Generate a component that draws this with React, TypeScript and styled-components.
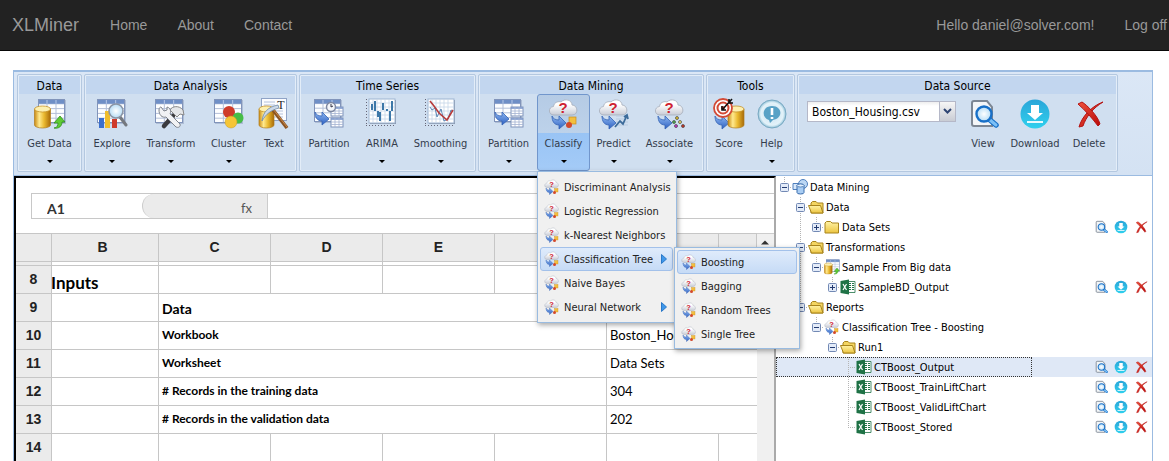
import React from "react";
import styled, { createGlobalStyle, css } from "styled-components";

const Global = createGlobalStyle`
  *, *::before, *::after { box-sizing: border-box; }
  html, body { margin: 0; background: #fff; overflow: hidden; }
  body { font-family: "DejaVu Sans Condensed", "Liberation Sans", sans-serif; font-size: 11px; color: #000; }
  button, input, select { font: inherit; color: inherit; margin: 0; }
  svg { display: block; flex: none; }
`;

/* ---------- site header ---------- */

const NavBar = styled.nav`
  display: flex;
  align-items: center;
  height: 51px;
  padding-left: 12px;
  background: #222;
  border-bottom: 1px solid #080808;
  font-family: "Liberation Sans", Arial, sans-serif;
  font-size: 14px;
  white-space: nowrap;
`;
const Brand = styled.a`
  color: #999;
  font-size: 18px;
  text-decoration: none;
`;
const NavLinks = styled.div`
  display: flex;
  gap: 30px;
  margin-left: 31px;
`;
const Account = styled(NavLinks)`
  margin-left: auto;
  margin-right: 2px;
`;
const NavLink = styled.a`
  color: #999;
  text-decoration: none;
`;

/* ---------- ribbon ---------- */

const Workspace = styled.main`
  margin: 19px 16px 0 13px;
  border: 1px solid #9bbbe1;
  border-bottom: 0;
`;
const Ribbon = styled.div`
  display: flex;
  gap: 2px;
  padding: 2px 3px 3px;
  background: linear-gradient(#dbe7f6, #d4e2f3);
  border-top: 1px solid #9bbbe1;
  border-bottom: 1px solid #9bbbe1;
`;
const Group = styled.section`
  height: 98px;
  padding: 1px;
  background: #d0dff0;
  border: 1px solid #b4c8e0;
  border-radius: 2px;
  box-shadow: inset 0 0 0 1px #e3edf8;
`;
const GroupTitle = styled.h2`
  margin: 0;
  height: 18px;
  background: #c2d6ef;
  font-size: 12px;
  font-weight: normal;
  line-height: 20px;
  text-align: center;
`;
const GroupBody = styled.div`
  display: flex;
`;
const ToolSlot = styled.div`
  position: relative;
`;
const ToolButton = styled.button<{ $width: number; $active?: boolean }>`
  display: flex;
  flex-direction: column;
  align-items: center;
  width: ${(p) => p.$width}px;
  height: 77px;
  padding: 3px 0 0;
  background: none;
  border: 1px solid transparent;
  border-radius: 3px;
  color: #333c4c;
  line-height: 14px;
  white-space: nowrap;
  ${(p) =>
    p.$active &&
    css`
      background: linear-gradient(#b5cbe5 0, #bdd2ea 38px, #99c4f5 38px, #a4cbf7 100%);
      border-color: #7196cc;
    `}
`;
const ToolLabel = styled.span`
  margin-top: 7px;
`;
const Caret = styled.span`
  width: 0;
  margin-top: 9px;
  border: 3px solid transparent;
  border-top-color: #000;
  border-bottom: 0;
`;
const SourcePicker = styled.label`
  position: relative;
  width: 149px;
  height: 21px;
  margin: 7px 2px 0 8px;
`;
const SourceSelect = styled.select`
  width: 100%;
  height: 100%;
  padding: 0 20px 0 4px;
  appearance: none;
  background: linear-gradient(#eee, #fff 4px);
  border: 1px solid #b5b8c8;
  border-radius: 0;
  font-size: 12px;
  color: #000;
`;
const SourceArrow = styled.span`
  position: absolute;
  top: 0;
  right: 0;
  display: grid;
  place-items: center;
  width: 17px;
  height: 21px;
  background: linear-gradient(#f6f6f6, #c9ccd4);
  border: 1px solid #b5b8c8;
  pointer-events: none;
`;

/* ---------- drop-down menus ---------- */

const MenuItem = styled.button<{ $active?: boolean }>`
  display: flex;
  align-items: center;
  gap: 4px;
  width: 100%;
  height: 24px;
  padding: 0 5px 0 3px;
  background: ${(p) => (p.$active ? "linear-gradient(#dfebfb, #c6dbf6)" : "none")};
  border: 1px solid ${(p) => (p.$active ? "#a3c1ea" : "transparent")};
  border-radius: 3px;
  color: #222;
  text-align: left;
  white-space: nowrap;
`;
const MenuPanel = styled.div`
  position: absolute;
  z-index: 5;
  top: 100%;
  left: 0;
  width: 140px;
  padding: 3px 3px 3px 2px;
  background: #f0f0f0;
  border: 1px solid #99bbe0;
  box-shadow: 1px 2px 5px rgba(0, 0, 0, 0.35);
`;
const SubPanel = styled(MenuPanel)`
  top: 0;
  left: calc(100% + 1px);
  width: 126px;
  padding: 2px;
`;
const MenuSlot = styled.div`
  position: relative;
`;
const MenuArrow = styled.svg`
  margin-left: auto;
`;

/* ---------- spreadsheet ---------- */

const Panes = styled.div`
  display: flex;
  align-items: stretch;
`;
const Sheet = styled.section`
  flex: 1;
  min-width: 0;
  padding-top: 15px;
  background: #fff;
  border-top: 2px solid #000;
  border-left: 2px solid #000;
  border-right: 2px solid #aaa;
`;
const FormulaBar = styled.div`
  display: flex;
  height: 26px;
  margin-left: 15px;
  border: 1px solid #c8c8c8;
  border-right: 0;
`;
const NameBox = styled.input`
  width: 110px;
  padding: 4px 0 0 15px;
  border: 0;
  background: none;
  font-family: Lato, "Open Sans", sans-serif;
  font-weight: bold;
  font-size: 14px;
  color: #333;
`;
const FxLabel = styled.label`
  width: 126px;
  padding: 5px 15px 0 0;
  background: #ebebeb;
  border: 1px solid #ccc;
  border-width: 0 1px;
  border-radius: 13px 0 0 13px;
  font-family: Lato, "Open Sans", sans-serif;
  font-size: 13px;
  line-height: 18px;
  color: #555;
  text-align: right;
`;
const FormulaInput = styled.input`
  flex: 1;
  min-width: 0;
  border: 0;
  background: none;
`;
const GridArea = styled.div`
  display: flex;
  margin-top: 14px;
`;
const Grid = styled.table`
  flex: 1;
  width: 0;
  table-layout: fixed;
  border-collapse: separate;
  border-spacing: 0;
  font-family: Lato, "Open Sans", sans-serif;
`;
const cellLines = css`
  padding: 0;
  border: 0 solid #c6c6c6;
  border-right-width: 1px;
  border-bottom-width: 1px;
`;
const ColHead = styled.th`
  ${cellLines}
  height: 29px;
  padding-bottom: 2px;
  background: #ebebeb;
  border-top-width: 1px;
  font: bold 14px/20px "Liberation Sans", Arial, sans-serif;
  color: #222;
  &:nth-child(2) {
    padding-right: 5px;
  }
`;
const RowHead = styled.th`
  ${cellLines}
  background: #ebebeb;
  font: bold 14px/20px "Liberation Sans", Arial, sans-serif;
  color: #222;
`;
const Row = styled.tr<{ $thin?: boolean }>`
  height: ${(p) => (p.$thin ? 4 : 28)}px;
  & > th {
    padding-bottom: ${(p) => (p.$thin ? 0 : 2)}px;
  }
`;
type CellKind = "title" | "heading" | "label" | "value";
const cellFont: Record<CellKind, number> = { title: 17, heading: 14, label: 12, value: 13 };
const Cell = styled.td<{ $kind?: CellKind; $last?: boolean }>`
  ${cellLines}
  overflow: hidden;
  padding-left: ${(p) => (p.$kind === "title" ? 0 : 3)}px;
  ${(p) => p.$kind === "title" && "padding-top: 6px; text-indent: -1px;"}
  ${(p) => p.$kind === "heading" && "padding-top: 3px;"}
  ${(p) => (p.$kind === "label" || p.$kind === "value") && "padding-bottom: 1px;"}
  font-size: ${(p) => cellFont[p.$kind ?? "label"]}px;
  font-weight: ${(p) => (p.$kind === "value" ? "normal" : "bold")};
  line-height: 20px;
  white-space: nowrap;
  ${(p) => p.$last && "border-right-width: 0;"}
`;
const ScrollTrack = styled.div`
  width: 17px;
  padding: 6px 4px;
  background: #f0f0f0;
  border-top: 1px solid #ccc;
`;

/* ---------- task tree ---------- */

const Tree = styled.aside`
  width: 376px;
  padding-top: 1px;
  background: #fff;
`;
const TreeRow = styled.div<{ $selected?: boolean }>`
  display: flex;
  justify-content: space-between;
  height: 20px;
  background: ${(p) => (p.$selected ? "#dfe8f6" : "none")};
`;
const TreeCell = styled.div<{ $selected?: boolean }>`
  display: flex;
  align-items: center;
  width: 256px;
  white-space: nowrap;
  outline: ${(p) => (p.$selected ? "1px dotted #333" : "none")};
  outline-offset: -1px;
`;
type GuideKind = "blank" | "line" | "tee" | "end" | "toggleMid" | "toggleEnd";
const Guide = styled.span<{ $kind: GuideKind }>`
  display: grid;
  place-items: center;
  flex: none;
  width: 16px;
  height: 20px;
  background-repeat: no-repeat;
  ${(p) =>
    p.$kind !== "blank" &&
    css`
      background-image: repeating-linear-gradient(#b4b4b4 0 1px, transparent 1px 2px)
        ${p.$kind === "line" ? "" : ", repeating-linear-gradient(90deg, #b4b4b4 0 1px, transparent 1px 2px)"};
      background-size: 1px ${p.$kind === "end" || p.$kind === "toggleEnd" ? 10 : 20}px, 8px 1px;
      background-position: 8px 0, 8px 10px;
    `}
`;
const Toggle = styled.button`
  display: block;
  width: 9px;
  height: 9px;
  padding: 0;
  border: 0;
  background: none;
`;
const TreeLabel = styled.a`
  margin-left: 2px;
  color: #000;
  text-decoration: none;
`;
const RowActions = styled.div`
  display: flex;
  align-items: center;
  gap: 6px;
  padding-right: 4px;
`;
const IconButton = styled.button`
  display: block;
  padding: 0;
  border: 0;
  background: none;
`;

/* ---------- drawings ---------- */

const SharedPaint = () => (
  <svg width="0" height="0" aria-hidden="true">
    <defs>
      <linearGradient id="gold"><stop offset="0" stopColor="#c98a14" /><stop offset=".3" stopColor="#ffe98e" /><stop offset=".6" stopColor="#eab92f" /><stop offset="1" stopColor="#a86a08" /></linearGradient>
      <linearGradient id="cloud" x2="0" y2="1"><stop offset=".3" stopColor="#fff" /><stop offset="1" stopColor="#c8ccd6" /></linearGradient>
      <linearGradient id="blue" x2="0" y2="1"><stop offset="0" stopColor="#8fb8f2" /><stop offset="1" stopColor="#2c5fc0" /></linearGradient>
      <linearGradient id="folder" x2="0" y2="1"><stop offset="0" stopColor="#fff3a6" /><stop offset="1" stopColor="#ecc440" /></linearGradient>
      <linearGradient id="red" x2="1" y2="1"><stop offset="0" stopColor="#f0523c" /><stop offset="1" stopColor="#b80a0a" /></linearGradient>
      <linearGradient id="cyan" x2="0" y2="1"><stop offset="0" stopColor="#2aa5d8" /><stop offset="1" stopColor="#2fd0ee" /></linearGradient>
      <radialGradient id="glass"><stop offset=".3" stopColor="#d3e8f4" /><stop offset=".8" stopColor="#e3f2f9" /><stop offset="1" stopColor="#8fc0d6" /></radialGradient>
      <radialGradient id="lens"><stop offset="0" stopColor="#fff" /><stop offset="1" stopColor="#b5dcf6" /></radialGradient>
    </defs>
  </svg>
);

const TableArt = ({ x = 0, y = 0, w = 28, h = 24, cols = 3, rows = 5 }) => (
  <g>
    <rect x={x + 1} y={y + 1} width={w} height={h} fill="#9aa9c4" opacity=".6" />
    <rect x={x} y={y} width={w} height={h} fill="#fdfeff" />
    <path
      d={
        Array.from({ length: cols - 1 }, (_, i) => `M${x + ((i + 1) * w) / cols} ${y}v${h}`).join("") +
        Array.from({ length: rows - 1 }, (_, i) => `M${x} ${y + ((i + 1) * h) / rows}h${w}`).join("")
      }
      stroke="#b3bfd8"
    />
    <rect x={x} y={y} width={w} height={h / rows} fill="#6f8fc6" />
    <path d={`M${x + w / cols} ${y + 1}v${h / rows - 1}M${x + (2 * w) / cols} ${y + 1}v${h / rows - 1}`} stroke="#b6c8e8" />
    <rect x={x + 0.5} y={y + 0.5} width={w - 1} height={h - 1} fill="none" stroke="#8194ba" />
  </g>
);
const MiniTable = ({ x = 0, y = 0 }) => (
  <g>
    <rect x={x} y={y} width="12" height="9" fill="#fff" stroke="#7f93ba" />
    <path d={`M${x} ${y + 1}h12`} stroke="#7c98cc" strokeWidth="1.600" />
    <path d={`M${x} ${y + 4}h12M${x} ${y + 6.5}h12M${x + 4} ${y}v9M${x + 8} ${y}v9`} stroke="#a3b3d2" strokeWidth=".8" />
  </g>
);
const Cylinder = ({ x = 0, y = 0, w = 16, h = 22 }) => (
  <g>
    <path d={`M${x} ${y + 3}v${h - 6}a${w / 2} 3 0 0 0 ${w} 0v${-(h - 6)}z`} fill="url(#gold)" stroke="#b07d1c" strokeWidth=".7" />
    <ellipse cx={x + w / 2} cy={y + 3} rx={w / 2} ry="3" fill="#fdf0b0" stroke="#c6932a" strokeWidth=".8" />
  </g>
);
const BlueArrow = ({ x = 0, y = 0 }) => (
  <path transform={`translate(${x} ${y})`} d="M0 0C1 3 4 4 7 4V0l7 7-7 6V9C2 9 0 5 0 0z" fill="url(#blue)" stroke="#3563b4" strokeWidth=".8" />
);
const CloudArt = () => (
  <g>
    <path d="M6 17C0 17 0 9 5.500 8.500 6 4 11 3 13 4c4-4 11-2 11 3 6 0 7 10 0 10z" fill="url(#cloud)" stroke="#a6adba" strokeWidth=".8" />
    <text x="15" y="15" textAnchor="middle" fontFamily="Liberation Sans, sans-serif" fontWeight="bold" fontSize="15" fill="#cf2230">?</text>
  </g>
);
const PlotArt = () => (
  <g>
    <rect x="4" y="2" width="26" height="24" fill="#8a94a8" />
    <rect x="3" y="1" width="26" height="24" fill="#fff" stroke="#9db5d2" />
    <path d="M7 1v24M11 1v24M15 1v24M19 1v24M23 1v24M3 5h26M3 9h26M3 13h26M3 17h26M3 21h26" stroke="#c5d6e8" strokeWidth=".8" />
    <path d="M.5 1v27M0 27.500h30" stroke="#667" strokeDasharray="1 2" />
  </g>
);

const art: Record<string, React.ReactNode> = {
  getData: (
    <>
      <TableArt x={4} y={1} w={27} h={24} />
      <Cylinder x={0.5} y={8} w={16} h={22} />
      <path d="M20 30c3 0 4-3 4-5h-4l6-7 5 6h-3c0 4-3 7-8 6z" fill="#5ecb34" stroke="#2f8f1c" strokeWidth=".8" />
    </>
  ),
  explore: (
    <>
      <TableArt x={1} y={1} w={28} h={24} />
      <path d="M3 20h5v10H3z" fill="#3c6fcc" />
      <path d="M9 13h5v17H9z" fill="#f0bd2c" />
      <path d="M16 21h5v9h-5z" fill="#cf3a2c" />
      <path d="M24 19l6 8" stroke="#75797f" strokeWidth="3" strokeLinecap="round" />
      <circle cx="20" cy="13" r="7" fill="url(#lens)" stroke="#8b95a5" strokeWidth="1.600" />
    </>
  ),
  transform: (
    <>
      <TableArt x={0} y={1} w={28} h={24} />
      <path d="M18 18L9 28" stroke="#3a3a3e" strokeWidth="4.500" strokeLinecap="round" />
      <path d="M15 12c2-4 9-5 13 0l1 5-4-1-3 3-4-4z" fill="#e4e6e9" stroke="#888" />
      <path d="M4 12c0-2 1-3 2-3l3 4 3-1 0-3c4 1 4 5 3 7l10 10c1 3-2 4-4 3L11 19c-4 1-7-2-7-7z" fill="#f1f2f4" stroke="#7f848c" />
    </>
  ),
  cluster: (
    <>
      <TableArt x={1} y={1} w={28} h={24} />
      <circle cx="16" cy="14" r="6" fill="#cf3c2a" />
      <circle cx="25" cy="20" r="5.500" fill="#46bd46" />
      <circle cx="18" cy="24" r="6" fill="#f5c536" stroke="#c79a20" strokeWidth=".5" />
    </>
  ),
  text: (
    <>
      <rect x="3.500" y=".5" width="25" height="22" fill="#fbfcff" stroke="#8fa3c6" />
      <path d="M6 4h11M6 7h11M6 10h11M6 13h19M6 16h19M6 19h19" stroke="#b4c2dc" />
      <text x="23" y="11" textAnchor="middle" fontFamily="Liberation Serif, serif" fontSize="12" fill="#222">T</text>
      <Cylinder x={1} y={8} w={15} h={22} />
      <path d="M15 12l14 18" stroke="#8b5423" strokeWidth="3.500" />
      <path d="M15 11l14 18" stroke="#c98a4b" strokeWidth="1" />
      <path d="M4 23C5 14 10 9 20 7l1 3C13 12 8 16 4 23z" fill="#cdd9e8" stroke="#6d89a8" strokeWidth=".8" />
    </>
  ),
  partition: (
    <>
      <TableArt x={1} y={1} w={27} h={23} />
      <BlueArrow x={2} y={14} />
      <MiniTable x={18} y={9} />
      <MiniTable x={18} y={20} />
    </>
  ),
  partitionTime: (
    <>
      <TableArt x={1} y={1} w={27} h={23} />
      <BlueArrow x={2} y={14} />
      <MiniTable x={18} y={9} />
      <MiniTable x={18} y={20} />
      <circle cx="18" cy="9" r="4.500" fill="#f4f6fb" stroke="#7e88a2" strokeWidth="1.500" />
      <path d="M18 6v3l2-1" stroke="#334" fill="none" />
    </>
  ),
  arima: (
    <>
      <PlotArt />
      <path d="M6 12V6M9 13V3M17 12V5M21 13v-2M26 13V3M12 13v6M14 14v9M24 13v10" stroke="#3d78a8" strokeWidth="2" />
    </>
  ),
  smoothing: (
    <>
      <PlotArt />
      <path d="M5 9l2 3 3-2 2 9 4-8 3 12 4-2 3-9 2 1" fill="none" stroke="#5b86b4" />
      <path d="M5 3l4 5 5 7 8 7 6-10" fill="none" stroke="#b73a3a" strokeWidth="1.600" />
    </>
  ),
  classify: (
    <>
      <CloudArt />
      <BlueArrow x={4} y={18} />
      <rect x="21" y="19" width="7" height="7" fill="#f3bf3e" stroke="#c98d1e" strokeWidth=".7" />
      <circle cx="21" cy="27" r="3" fill="#d2482c" />
    </>
  ),
  predict: (
    <>
      <CloudArt />
      <BlueArrow x={4} y={18} />
      <path d="M18 18h12M18 21h12M18 24h12M18 27h12" stroke="#b9cbe0" />
      <path d="M17 29l5-6 3 3 4-9M26 19l3-2 1 4" fill="none" stroke="#3c6b9a" strokeWidth="1.800" />
    </>
  ),
  associate: (
    <>
      <CloudArt />
      <BlueArrow x={4} y={18} />
      <g stroke="#444" strokeWidth=".7">
        <circle cx="23" cy="20" r="1.500" fill="#e6c229" />
        <circle cx="26" cy="24" r="1.500" fill="#f0dd66" />
        <circle cx="20" cy="24" r="1.500" fill="#4cae4c" />
        <circle cx="29" cy="28" r="1.500" fill="#c32" />
        <circle cx="22" cy="28" r="1.500" fill="#c3c" />
      </g>
    </>
  ),
  score: (
    <>
      <BlueArrow x={2} y={18} />
      <Cylinder x={15} y={8} w={16} h={22} />
      <circle cx="10" cy="10" r="9" fill="#fff" stroke="#d34a36" strokeWidth="1.800" />
      <circle cx="10" cy="10" r="5.500" fill="#fff" stroke="#d34a36" strokeWidth="2" />
      <circle cx="10" cy="10" r="2" fill="#d34a36" />
      <path d="M9 12L19 1M16 1v4h4M9 8v4h4" stroke="#111" strokeWidth="1.600" fill="none" />
    </>
  ),
  help: (
    <>
      <circle cx="16" cy="16" r="14" fill="url(#glass)" stroke="#79a9c2" />
      <path d="M16 8c11 0 11 13 1 14l-3 3-1-3C5 20 6 8 16 8z" fill="#58a2c6" />
      <path d="M16 10v7M16 19v2" stroke="#fff" strokeWidth="2.600" />
    </>
  ),
  view: (
    <>
      <path d="M7 3h13l5 6v19H7q-2 0-2-2V5q0-2 2-2z" fill="#f4f6f8" stroke="#7d8794" strokeWidth="2" />
      <path d="M23 22l6 5" stroke="#1870c8" strokeWidth="5.500" strokeLinecap="round" />
      <path d="M23 22l6 5" stroke="#7cc0f6" strokeWidth="3" strokeLinecap="round" />
      <circle cx="17" cy="16" r="7.500" fill="url(#lens)" stroke="#1870c8" strokeWidth="2.400" />
    </>
  ),
  download: (
    <>
      <circle cx="16" cy="16" r="14.500" fill="url(#cyan)" />
      <path d="M12 7h8v8h4l-8 7-8-7h4z" fill="#fff" />
      <path d="M8 24h16" stroke="#fff" strokeWidth="1.800" />
    </>
  ),
  remove: (
    <>
      <path d="M30 4C19 8 9 18 6 29l4-1C13 19 20 10 30 4z" fill="url(#red)" stroke="#b41414" />
      <path d="M5 6l4-2c5 3 16 14 18 22l-2 2C19 20 12 12 5 6z" fill="url(#red)" stroke="#b41414" />
    </>
  ),
  miner: (
    <>
      <path d="M2 9h14v12H2z" fill="#d8e8fa" stroke="#4f7fbd" strokeWidth="2" />
      <circle cx="22" cy="10" r="9" fill="#bdd8f4" stroke="#4f7fbd" strokeWidth="2" />
      <path d="M10 13v14a7 3 0 0 0 14 0V13a7 3 0 0 0-14 0z" fill="#a9cdf3" stroke="#3b6cab" strokeWidth="2" />
      <ellipse cx="17" cy="13" rx="7" ry="3" fill="#e5f1fd" stroke="#3b6cab" strokeWidth="1.500" />
    </>
  ),
  folder: (
    <path d="M2 8l3-3h8l3 3h13v20H2z" fill="url(#folder)" stroke="#a8841c" strokeWidth="2" />
  ),
  folderOpen: (
    <>
      <path d="M6 14V8l3-3h7l3 3h11v20H6z" fill="#f3d561" stroke="#a8841c" strokeWidth="2" />
      <path d="M1 13h24l5 15H7z" fill="url(#folder)" stroke="#a8841c" strokeWidth="2" />
    </>
  ),
  excel: (
    <>
      <path d="M15 5h15v22H15z" fill="#fff" stroke="#1f7246" strokeWidth="1.600" />
      <path d="M18 9h4M24 9h4M18 13h4M24 13h4M18 17h4M24 17h4M18 21h4M24 21h4" stroke="#1f7246" strokeWidth="2" />
      <path d="M1 4l17-3v30L1 28z" fill="#1f7246" />
      <path d="M6 10l7 12M13 10L6 22" stroke="#fff" strokeWidth="2.400" />
    </>
  ),
};

const Icon = ({ name, size = 32 }: { name: string; size?: number }) => (
  <svg width={size} height={size} viewBox="0 0 32 32" aria-hidden="true">
    {art[name]}
  </svg>
);

/* ---------- data ---------- */

type Tool = { label: string; icon: string; width: number; menu?: boolean; active?: boolean };
const groups: { title: string; tools: Tool[]; picker?: boolean }[] = [
  { title: "Data", tools: [{ label: "Get Data", icon: "getData", width: 61, menu: true }] },
  {
    title: "Data Analysis",
    tools: [
      { label: "Explore", icon: "explore", width: 52, menu: true },
      { label: "Transform", icon: "transform", width: 66, menu: true },
      { label: "Cluster", icon: "cluster", width: 49, menu: true },
      { label: "Text", icon: "text", width: 42 },
    ],
  },
  {
    title: "Time Series",
    tools: [
      { label: "Partition", icon: "partitionTime", width: 56 },
      { label: "ARIMA", icon: "arima", width: 50, menu: true },
      { label: "Smoothing", icon: "smoothing", width: 67, menu: true },
    ],
  },
  {
    title: "Data Mining",
    tools: [
      { label: "Partition", icon: "partition", width: 57, menu: true },
      { label: "Classify", icon: "classify", width: 53, menu: true, active: true },
      { label: "Predict", icon: "predict", width: 47, menu: true },
      { label: "Associate", icon: "associate", width: 65, menu: true },
    ],
  },
  {
    title: "Tools",
    tools: [
      { label: "Score", icon: "score", width: 42 },
      { label: "Help", icon: "help", width: 43, menu: true },
    ],
  },
  {
    title: "Data Source",
    picker: true,
    tools: [
      { label: "View", icon: "view", width: 50 },
      { label: "Download", icon: "download", width: 54 },
      { label: "Delete", icon: "remove", width: 54 },
    ],
  },
];

const methods = ["Discriminant Analysis", "Logistic Regression", "k-Nearest Neighbors", "Classification Tree", "Naive Bayes", "Neural Network"];
const treeMethods = ["Boosting", "Bagging", "Random Trees", "Single Tree"];

const records = [
  { n: 10, label: "Workbook", value: "Boston_Housing.csv" },
  { n: 11, label: "Worksheet", value: "Data Sets" },
  { n: 12, label: "# Records in the training data", value: "304" },
  { n: 13, label: "# Records in the validation data", value: "202" },
];

type Node = { label: string; icon: string; guides: GuideKind[]; open?: boolean; actions?: boolean; selected?: boolean };
const nodes: Node[] = [
  { label: "Data Mining", icon: "miner", guides: ["toggleEnd"], open: true },
  { label: "Data", icon: "folderOpen", guides: ["blank", "toggleMid"], open: true },
  { label: "Data Sets", icon: "folder", guides: ["blank", "line", "toggleEnd"], open: false, actions: true },
  { label: "Transformations", icon: "folderOpen", guides: ["blank", "toggleMid"], open: true },
  { label: "Sample From Big data", icon: "getData", guides: ["blank", "line", "toggleEnd"], open: true },
  { label: "SampleBD_Output", icon: "excel", guides: ["blank", "line", "blank", "toggleEnd"], open: false, actions: true },
  { label: "Reports", icon: "folderOpen", guides: ["blank", "toggleEnd"], open: true },
  { label: "Classification Tree - Boosting", icon: "classify", guides: ["blank", "blank", "toggleEnd"], open: true },
  { label: "Run1", icon: "folderOpen", guides: ["blank", "blank", "blank", "toggleEnd"], open: true },
  { label: "CTBoost_Output", icon: "excel", guides: ["blank", "blank", "blank", "blank", "tee"], actions: true, selected: true },
  { label: "CTBoost_TrainLiftChart", icon: "excel", guides: ["blank", "blank", "blank", "blank", "tee"], actions: true },
  { label: "CTBoost_ValidLiftChart", icon: "excel", guides: ["blank", "blank", "blank", "blank", "tee"], actions: true },
  { label: "CTBoost_Stored", icon: "excel", guides: ["blank", "blank", "blank", "blank", "end"], actions: true },
];

/* ---------- pieces ---------- */

const SubmenuArrow = () => (
  <MenuArrow width="6" height="10" viewBox="0 0 6 10" aria-hidden="true">
    <path d="M.5 .5v9L5.500 5z" fill="#3f97ea" stroke="#2a78c8" />
  </MenuArrow>
);

const ClassifyMenu = () => (
  <MenuPanel role="menu">
    {methods.map((m) => {
      const open = m === "Classification Tree";
      return (
        <MenuSlot key={m}>
          <MenuItem role="menuitem" $active={open}>
            <Icon name="classify" size={16} />
            {m}
            {(open || m === "Neural Network") && <SubmenuArrow />}
          </MenuItem>
          {open && (
            <SubPanel role="menu">
              {treeMethods.map((t) => (
                <MenuItem key={t} role="menuitem" $active={t === "Boosting"}>
                  <Icon name="classify" size={16} />
                  {t}
                </MenuItem>
              ))}
            </SubPanel>
          )}
        </MenuSlot>
      );
    })}
  </MenuPanel>
);

const ToggleMark = ({ open }: { open: boolean }) => (
  <Toggle aria-label={open ? "Collapse" : "Expand"}>
    <svg width="9" height="9" viewBox="0 0 9 9">
      <rect x=".5" y=".5" width="8" height="8" rx="1" fill="#e3ebf8" stroke="#7289b4" />
      <path d={open ? "M2 4.500h5" : "M2 4.500h5M4.500 2v5"} stroke="#223a70" />
    </svg>
  </Toggle>
);

const emptyCells = (count: number) =>
  Array.from({ length: count }, (_, i) => <Cell key={i} $last={i === count - 1} />);

export default function App() {
  return (
    <>
      <Global />
      <NavBar>
        <Brand href="#">XLMiner</Brand>
        <NavLinks>
          <NavLink href="#">Home</NavLink>
          <NavLink href="#">About</NavLink>
          <NavLink href="#">Contact</NavLink>
        </NavLinks>
        <Account>
          <NavLink href="#">Hello daniel@solver.com!</NavLink>
          <NavLink href="#">Log off</NavLink>
        </Account>
      </NavBar>
      <SharedPaint />
      <Workspace>
        <Ribbon>
          {groups.map((g) => (
            <Group key={g.title}>
              <GroupTitle>{g.title}</GroupTitle>
              <GroupBody>
                {g.picker && (
                  <SourcePicker>
                    <SourceSelect aria-label="Data source">
                      <option>Boston_Housing.csv</option>
                    </SourceSelect>
                    <SourceArrow>
                      <svg width="9" height="7" viewBox="0 0 9 7" aria-hidden="true">
                        <path d="M1 1l3.500 3.500L8 1" fill="none" stroke="#2f4573" strokeWidth="2" />
                      </svg>
                    </SourceArrow>
                  </SourcePicker>
                )}
                {g.tools.map((t) => (
                  <ToolSlot key={t.label}>
                    <ToolButton $width={t.width} $active={t.active}>
                      <Icon name={t.icon} />
                      <ToolLabel>{t.label}</ToolLabel>
                      {t.menu && <Caret />}
                    </ToolButton>
                    {t.active && <ClassifyMenu />}
                  </ToolSlot>
                ))}
              </GroupBody>
            </Group>
          ))}
        </Ribbon>
        <Panes>
          <Sheet>
            <FormulaBar>
              <NameBox aria-label="Cell" defaultValue="A1" />
              <FxLabel htmlFor="formula">fx</FxLabel>
              <FormulaInput id="formula" />
            </FormulaBar>
            <GridArea>
              <Grid>
                <colgroup>
                  <col width="36" />
                  <col width="107" />
                  <col width="112" />
                  <col width="112" />
                  <col width="112" />
                  <col width="112" />
                  <col width="112" />
                  <col />
                </colgroup>
                <thead>
                  <tr>
                    {["", "B", "C", "D", "E", "F", "G", ""].map((c, i) => (
                      <ColHead key={i}>{c}</ColHead>
                    ))}
                  </tr>
                </thead>
                <tbody>
                  <Row $thin>
                    <RowHead />
                    {emptyCells(7)}
                  </Row>
                  <Row>
                    <RowHead>8</RowHead>
                    <Cell $kind="title">Inputs</Cell>
                    {emptyCells(6)}
                  </Row>
                  <Row>
                    <RowHead>9</RowHead>
                    <Cell />
                    <Cell $kind="heading" $last colSpan={6}>Data</Cell>
                  </Row>
                  {records.map((r) => (
                    <Row key={r.n}>
                      <RowHead>{r.n}</RowHead>
                      <Cell />
                      <Cell $kind="label" colSpan={4}>{r.label}</Cell>
                      <Cell $kind="value" $last colSpan={2}>{r.value}</Cell>
                    </Row>
                  ))}
                  <Row>
                    <RowHead>14</RowHead>
                    {emptyCells(7)}
                  </Row>
                </tbody>
              </Grid>
              <ScrollTrack>
                <svg width="8" height="5" viewBox="0 0 8 5" aria-hidden="true">
                  <path d="M0 4.500L4 .5l4 4z" fill="#333" />
                </svg>
              </ScrollTrack>
            </GridArea>
          </Sheet>
          <Tree>
            {nodes.map((n) => (
              <TreeRow key={n.label} $selected={n.selected}>
                <TreeCell $selected={n.selected}>
                  {n.guides.map((k, i) => (
                    <Guide key={i} $kind={k}>
                      {k.startsWith("toggle") && <ToggleMark open={!!n.open} />}
                    </Guide>
                  ))}
                  <Icon name={n.icon} size={16} />
                  <TreeLabel href="#">{n.label}</TreeLabel>
                </TreeCell>
                {n.actions && (
                  <RowActions>
                    <IconButton aria-label="View"><Icon name="view" size={14} /></IconButton>
                    <IconButton aria-label="Download"><Icon name="download" size={14} /></IconButton>
                    <IconButton aria-label="Delete"><Icon name="remove" size={14} /></IconButton>
                  </RowActions>
                )}
              </TreeRow>
            ))}
          </Tree>
        </Panes>
      </Workspace>
    </>
  );
}
